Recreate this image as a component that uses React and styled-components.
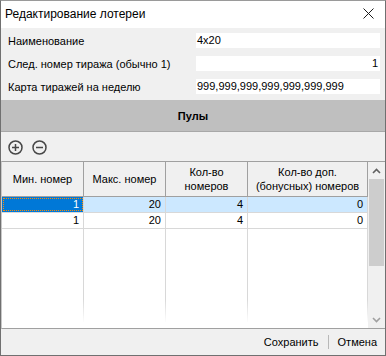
import React from 'react'
import styled, { createGlobalStyle } from 'styled-components'

const GlobalStyle = createGlobalStyle`
  html, body {
    margin: 0;
    padding: 0;
    background: #ffffff;
  }
  body {
    font-family: "Liberation Sans", Arial, sans-serif;
    font-size: 11px;
    color: #000;
  }
  * { box-sizing: border-box; }
`

const Window = styled.div`
  width: 386px;
  height: 356px;
  display: flex;
  flex-direction: column;
  background: #f0f0f0;
  border: 1px solid #707070;
  border-top-color: #9a9a9a;
`

const TitleBar = styled.div`
  height: 27px;
  flex: none;
  background: #fff;
  display: flex;
  align-items: center;
  justify-content: space-between;
  padding: 0 11px 2px 4px;
  font-size: 12px;
`

const CloseIcon = () => (
  <svg width="11" height="11" viewBox="0 0 11 11">
    <path d="M0.5 0.5 L10.5 10.5 M10.5 0.5 L0.5 10.5" stroke="#1a1a1a" strokeWidth="1" fill="none" />
  </svg>
)

const Form = styled.div`
  display: flex;
  flex-direction: column;
  gap: 8px;
  padding: 5px 5px 6px 7px;
`

const Row = styled.div`
  display: flex;
  align-items: center;
  justify-content: space-between;
  height: 15px;
`

const Input = styled.div`
  width: 184px;
  height: 15px;
  background: #fff;
  line-height: 15px;
  padding: 0 2px 0 1px;
  text-align: ${p => (p.$right ? 'right' : 'left')};
`

const SectionHeader = styled.div`
  height: 32px;
  flex: none;
  background: #bfbfbf;
  border-bottom: 1px solid #a8a8a8;
  display: flex;
  align-items: center;
  justify-content: center;
  font-weight: bold;
  padding-top: 1px;
`

const Toolbar = styled.div`
  height: 29px;
  flex: none;
  display: flex;
  align-items: center;
  gap: 9px;
  padding: 1px 0 0 7px;
`

const IconButton = styled.span`
  display: inline-flex;
  width: 15px;
  height: 15px;
`

const PlusIcon = ({ minus }) => (
  <svg width="15" height="15" viewBox="0 0 15 15">
    <circle cx="7.5" cy="7.5" r="6.5" stroke="#474747" strokeWidth="1.5" fill="none" />
    <path d="M4 7.5 H11" stroke="#474747" strokeWidth="1.5" />
    {!minus && <path d="M7.5 4 V11" stroke="#474747" strokeWidth="1.5" />}
  </svg>
)

const TableWrap = styled.div`
  flex: 1;
  display: flex;
  background: #fff;
  border-top: 1px solid #a0a0a0;
  border-bottom: 1px solid #a0a0a0;
  border-left: 1px solid #c8c8c8;
  min-height: 0;
`

const Grid = styled.div`
  flex: 1;
  display: flex;
  flex-direction: column;
`

const cols = '82px 82px 82px 1fr'

const HeaderRow = styled.div`
  display: grid;
  grid-template-columns: ${cols};
  height: 35px;
  background: #f0f0f0;
  border-bottom: 1px solid #a0a0a0;
`

const HeaderCell = styled.div`
  display: flex;
  align-items: center;
  justify-content: center;
  text-align: center;
  line-height: 14px;
  border-right: 1px solid #a0a0a0;
  padding-bottom: 1px;
`

const BodyRow = styled.div`
  display: grid;
  grid-template-columns: ${cols};
  height: 16px;
  background: ${p => (p.$selected ? '#cce8ff' : '#fff')};
  border-bottom: 1px solid #d8d8d8;
`

const Cell = styled.div`
  text-align: right;
  line-height: 15px;
  padding-right: 4px;
  border-right: 1px solid #d8d8d8;
  ${p =>
    p.$focused &&
    `
    background: #0078d7;
    color: #fff;
    outline: 1px dotted #ff8c00;
    outline-offset: -2px;
  `}
`

const Filler = styled.div`
  flex: 1;
  display: grid;
  grid-template-columns: ${cols};
  padding-bottom: 6px;
`

const FillerCell = styled.div`
  border-right: 1px solid transparent;
  border-image: linear-gradient(to bottom, #d8d8d8 75%, #ffffff) 1;
`

const ScrollBar = styled.div`
  width: 17px;
  flex: none;
  background: #f0f0f0;
  display: flex;
  flex-direction: column;
  align-items: center;
`

const Arrow = styled.div`
  height: 17px;
  width: 100%;
  display: flex;
  align-items: center;
  justify-content: center;
  flex: none;
`

const Thumb = styled.div`
  width: 15px;
  height: 87px;
  background: #cdcdcd;
  flex: none;
`

const Track = styled.div`
  flex: 1;
`

const Chevron = ({ down }) => (
  <svg width="9" height="6" viewBox="0 0 9 6">
    <path
      d={down ? 'M1 1 L4.5 4.5 L8 1' : 'M1 5 L4.5 1.5 L8 5'}
      stroke={down ? '#a0a0a0' : '#606060'}
      strokeWidth="1.6"
      fill="none"
    />
  </svg>
)

const Footer = styled.div`
  height: 26px;
  flex: none;
  display: flex;
  align-items: center;
  justify-content: flex-end;
  padding: 0 8px 1px 0;
`

const FooterButton = styled.span`
  padding: 0 9px;
  line-height: 14px;
  & + & {
    border-left: 1px solid #b8b8b8;
    padding-right: 0;
  }
`

const rows = [
  { min: 1, max: 20, count: 4, bonus: 0 },
  { min: 1, max: 20, count: 4, bonus: 0 },
]

const App = () => (
  <>
    <GlobalStyle />
    <Window>
      <TitleBar>
        <span>Редактирование лотереи</span>
        <CloseIcon />
      </TitleBar>
      <Form>
        <Row>
          <span>Наименование</span>
          <Input>4x20</Input>
        </Row>
        <Row>
          <span>След. номер тиража (обычно 1)</span>
          <Input $right>1</Input>
        </Row>
        <Row>
          <span>Карта тиражей на неделю</span>
          <Input>999,999,999,999,999,999,999</Input>
        </Row>
      </Form>
      <SectionHeader>Пулы</SectionHeader>
      <Toolbar>
        <IconButton><PlusIcon /></IconButton>
        <IconButton><PlusIcon minus /></IconButton>
      </Toolbar>
      <TableWrap>
        <Grid>
          <HeaderRow>
            <HeaderCell>Мин. номер</HeaderCell>
            <HeaderCell>Макс. номер</HeaderCell>
            <HeaderCell>Кол-во<br />номеров</HeaderCell>
            <HeaderCell>Кол-во доп.<br />(бонусных) номеров</HeaderCell>
          </HeaderRow>
          {rows.map((r, i) => (
            <BodyRow key={`row-${i}`} $selected={i === 0}>
              <Cell $focused={i === 0}>{r.min}</Cell>
              <Cell>{r.max}</Cell>
              <Cell>{r.count}</Cell>
              <Cell>{r.bonus}</Cell>
            </BodyRow>
          ))}
          <Filler>
            <FillerCell />
            <FillerCell />
            <FillerCell />
            <FillerCell />
          </Filler>
        </Grid>
        <ScrollBar>
          <Arrow><Chevron /></Arrow>
          <Thumb />
          <Track />
          <Arrow><Chevron down /></Arrow>
        </ScrollBar>
      </TableWrap>
      <Footer>
        <FooterButton>Сохранить</FooterButton>
        <FooterButton>Отмена</FooterButton>
      </Footer>
    </Window>
  </>
)

export default App
